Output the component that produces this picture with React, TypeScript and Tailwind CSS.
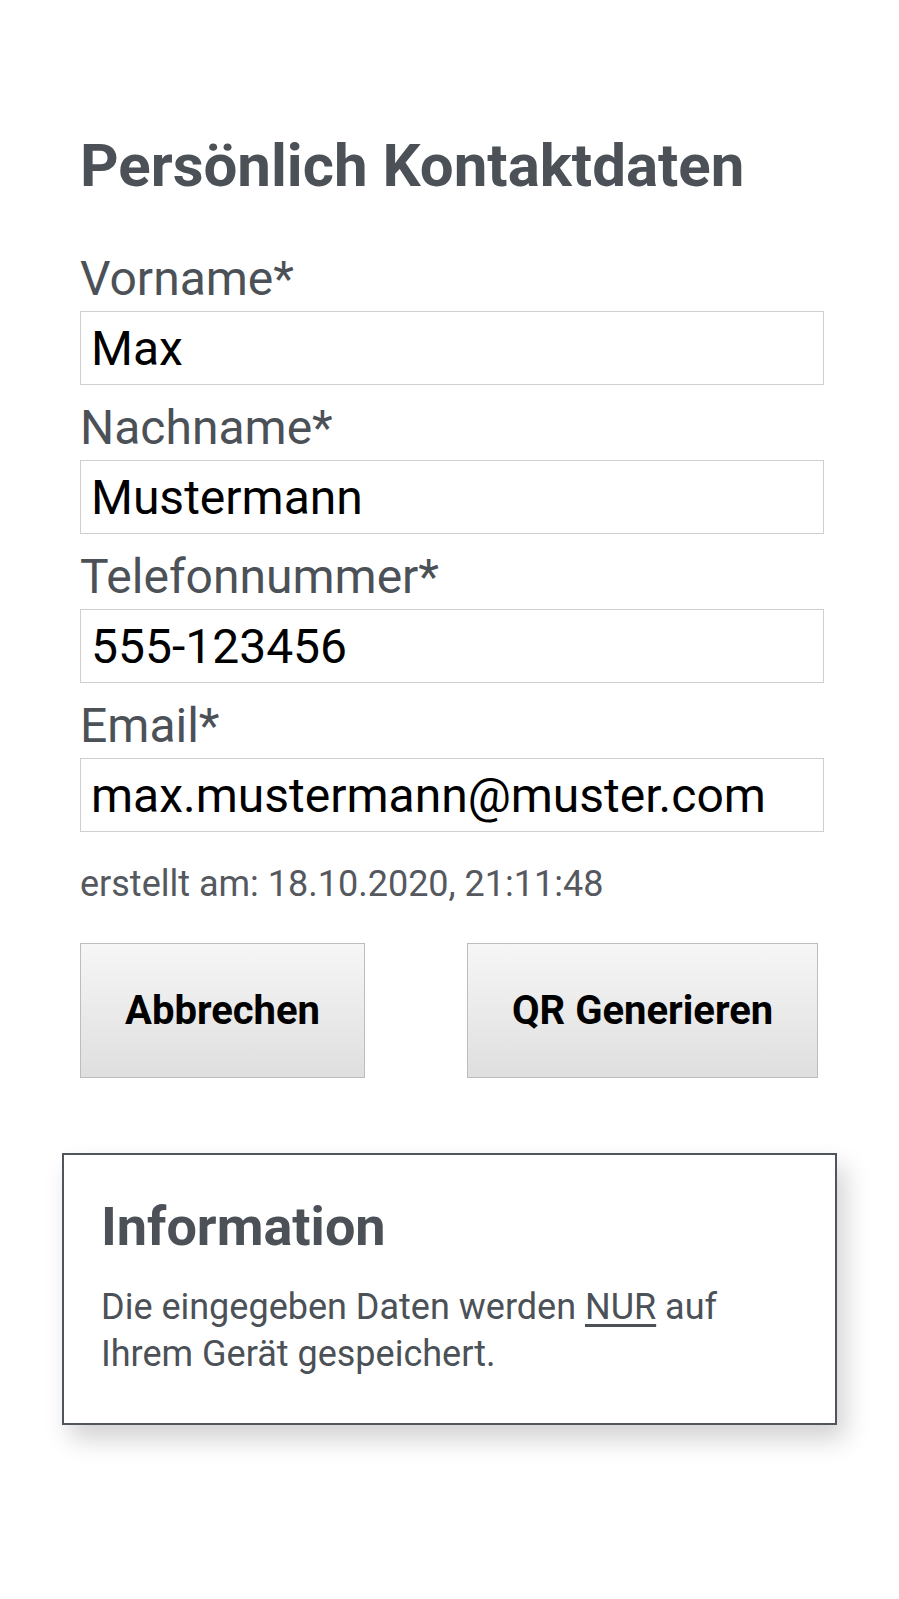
const FIELDS = [
  { label: "Vorname*", value: "Max" },
  { label: "Nachname*", value: "Mustermann" },
  { label: "Telefonnummer*", value: "555-123456" },
  { label: "Email*", value: "max.mustermann@muster.com" },
];

function Field({ label, value }: { label: string; value: string }) {
  return (
    <div className="mb-[15px] flex flex-col">
      <label className="mb-[4px] text-[48px] leading-[56px] text-[#4b5157]">{label}</label>
      <input
        readOnly
        value={value}
        className="h-[74px] w-[744px] border border-[#cfcfcf] bg-white px-[10px] text-[48px] text-black outline-none"
        style={{ fontFamily: "Roboto, 'Liberation Sans', sans-serif" }}
      />
    </div>
  );
}

export default function App() {
  return (
    <div
      className="min-h-[1599px] w-[899px] bg-white"
      style={{ fontFamily: "Roboto, 'Liberation Sans', sans-serif" }}
    >
      <div className="pl-[80px] pt-[129px]">
        <h1 className="mb-[49px] text-[60px] font-bold leading-[73px] text-[#4b5157]">
          Persönlich Kontaktdaten
        </h1>
        {FIELDS.map((f) => (
          <Field key={f.label} label={f.label} value={f.value} />
        ))}
        <p className="mt-[31px] text-[36px] leading-[42px] text-[#55595f]">
          erstellt am: 18.10.2020, 21:11:48
        </p>
        <div className="mt-[38px] flex gap-[102px]">
          <button className="h-[135px] border border-[#bdbdbd] bg-gradient-to-b from-[#f6f6f6] to-[#dfdfdf] px-[44px] text-[40px] font-bold text-black">
            Abbrechen
          </button>
          <button className="h-[135px] border border-[#bdbdbd] bg-gradient-to-b from-[#f6f6f6] to-[#dfdfdf] px-[44px] text-[40px] font-bold text-black">
            QR Generieren
          </button>
        </div>
      </div>
      <div className="mx-[62px] mt-[75px] border-2 border-[#50555b] bg-white px-[37px] pb-[45px] pt-[41px] shadow-[8px_14px_24px_rgba(0,0,0,0.18)]">
        <h2 className="mb-[26px] text-[54px] font-bold leading-[62px] text-[#4b5157]">Information</h2>
        <p className="text-[36px] leading-[47px] text-[#4b5157]">
          Die eingegeben Daten werden <u className="underline-offset-[5px]">NUR</u> auf
          Ihrem Gerät gespeichert.
        </p>
      </div>
    </div>
  );
}
